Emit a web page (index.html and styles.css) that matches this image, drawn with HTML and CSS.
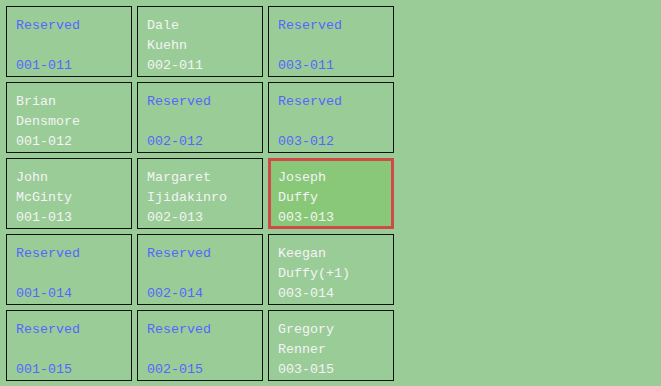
FILE: index.html
```html
<!DOCTYPE html>
<html lang="en">
<head>
  <meta charset="UTF-8" />
  <title>Seating</title>
  <link rel="stylesheet" href="styles.css">
</head>
<body>

  <div id="seats">
    <div class="seat reserved"><div>Reserved</div><div>&nbsp;</div><div>001-011</div></div>
    <div class="seat"><div>Dale</div><div>Kuehn</div><div>002-011</div></div>
    <div class="seat reserved"><div>Reserved</div><div>&nbsp;</div><div>003-011</div></div>

    <div class="seat"><div>Brian</div><div>Densmore</div><div>001-012</div></div>
    <div class="seat reserved"><div>Reserved</div><div>&nbsp;</div><div>002-012</div></div>
    <div class="seat reserved"><div>Reserved</div><div>&nbsp;</div><div>003-012</div></div>

    <div class="seat"><div>John</div><div>McGinty</div><div>001-013</div></div>
    <div class="seat"><div>Margaret</div><div>Ijidakinro</div><div>002-013</div></div>
    <div class="seat selected"><div>Joseph</div><div>Duffy</div><div>003-013</div></div>

    <div class="seat reserved"><div>Reserved</div><div>&nbsp;</div><div>001-014</div></div>
    <div class="seat reserved"><div>Reserved</div><div>&nbsp;</div><div>002-014</div></div>
    <div class="seat"><div>Keegan</div><div>Duffy(+1)</div><div>003-014</div></div>

    <div class="seat reserved"><div>Reserved</div><div>&nbsp;</div><div>001-015</div></div>
    <div class="seat reserved"><div>Reserved</div><div>&nbsp;</div><div>002-015</div></div>
    <div class="seat"><div>Gregory</div><div>Renner</div><div>003-015</div></div>
  </div>

</body>
</html>
```
FILE: styles.css
```css
body {
  background-color: #9acc98;
  font-family: "Liberation Mono", "DejaVu Sans Mono", monospace;
  font-size: 13.33px;
  margin: 6px;
}
#seats {
  display: grid;
  grid-template-columns: repeat(3, 126px);
  grid-auto-rows: 71px;
  gap: 5px;
}
.seat {
  box-sizing: border-box;
  border: 1px solid #111111;
  padding: 9px 9px 0;
  line-height: 20px;
  color: #f4f4f4;
  white-space: nowrap;
}
.seat.reserved {
  color: #5566ff;
}
.seat.selected {
  border: 3px solid #d04a48;
  padding: 7px 7px 0;
  background-color: #88c878;
}
```
